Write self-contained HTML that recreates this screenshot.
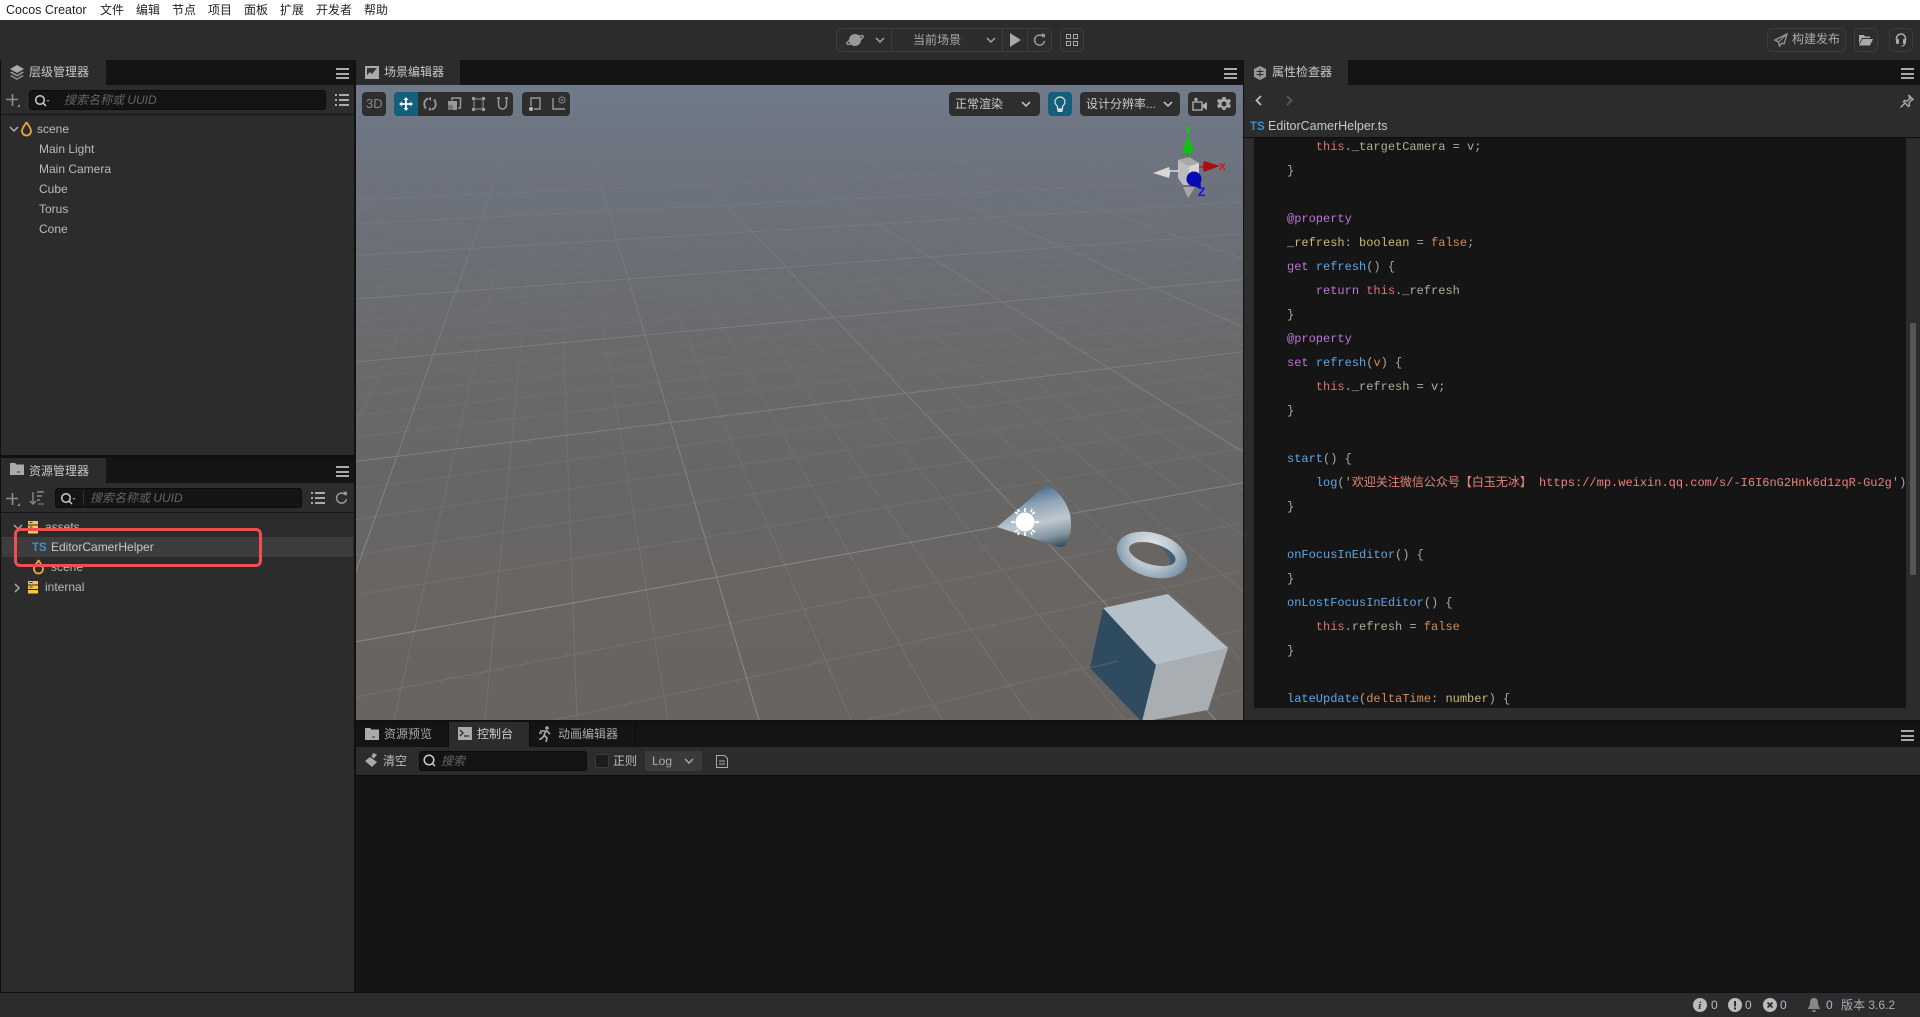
<!DOCTYPE html>
<html lang="zh">
<head>
<meta charset="utf-8">
<title>Cocos Creator</title>
<style>
html,body{margin:0;padding:0;width:1920px;height:1017px;overflow:hidden;background:#111;font-family:"Liberation Sans","Noto Sans CJK SC",sans-serif;font-size:12px;color:#bbb}
div,span,svg{box-sizing:border-box}
.a{position:absolute}
.t{position:absolute;white-space:nowrap;line-height:20px;height:20px;font-size:12px}
.p{background:#2c2c2c}
.hd{position:absolute;background:#141414}
.hb{position:absolute;width:13px;height:11px;border-top:2px solid #aaa;border-bottom:2px solid #aaa}
.hb:after{content:"";position:absolute;left:0;right:0;top:2.5px;height:2px;background:#aaa}
.box{position:absolute;background:#141414;border-radius:3px;border:1px solid #0c0c0c}
.ph{font-style:italic;color:#646464}
.btn{position:absolute;top:92px;height:24px;background:#2e2e2e;border-radius:4px}
.tb{position:absolute;border:1px solid #3c3c3c;border-radius:5px;background:#2d2d2d}
svg{position:absolute;overflow:visible}
.code{position:absolute;left:1254px;top:138px;width:652px;height:570px;background:#151515;overflow:hidden;font-family:"Liberation Mono","Noto Sans CJK SC",monospace;font-size:12px;line-height:24px;color:#abb2bf}
.code pre{margin:-3px 0 0 33px;padding:0;font:inherit;white-space:pre}
.r{color:#d9707a}.m{color:#b3aa9c}.u{color:#bb78d6}.l{color:#5ea6e4}.y{color:#cdb878}.o{color:#d28c5a}.s{color:#e8827a}.g{color:#a3aca4}.c{color:#b5ad8c}
</style>
</head>
<body>
<!-- menu -->
<div class="a" style="left:0;top:0;width:1920px;height:20px;background:#fff;color:#222">
<span class="t" style="left:6px;top:0;font-size:12.500px">Cocos Creator</span>
<span class="t" style="left:100px;top:0">文件</span><span class="t" style="left:136px;top:0">编辑</span><span class="t" style="left:172px;top:0">节点</span><span class="t" style="left:208px;top:0">项目</span><span class="t" style="left:244px;top:0">面板</span><span class="t" style="left:280px;top:0">扩展</span><span class="t" style="left:316px;top:0">开发者</span><span class="t" style="left:364px;top:0">帮助</span>
</div>
<!-- top toolbar -->
<div class="a p" style="left:0;top:20px;width:1920px;height:40px"></div>
<div class="tb" style="left:836px;top:28px;width:216px;height:24px"></div>
<div class="a" style="left:891px;top:29px;width:1px;height:22px;background:#3c3c3c"></div>
<div class="a" style="left:1002px;top:29px;width:1px;height:22px;background:#3c3c3c"></div>
<div class="a" style="left:1027px;top:29px;width:1px;height:22px;background:#3c3c3c"></div>
<svg style="left:846px;top:32px" width="18" height="16" viewBox="0 0 18 16"><circle cx="9" cy="8" r="6" fill="#999"/><ellipse cx="9" cy="8" rx="9" ry="2.4" transform="rotate(-25 9 8)" fill="none" stroke="#999" stroke-width="1.4"/></svg>
<svg style="left:875px;top:37px" width="10" height="6"><path d="M1 1l4 4 4-4" fill="none" stroke="#aaa" stroke-width="1.4"/></svg>
<span class="t" style="left:913px;top:30px;color:#aaa">当前场景</span>
<svg style="left:986px;top:37px" width="10" height="6"><path d="M1 1l4 4 4-4" fill="none" stroke="#aaa" stroke-width="1.4"/></svg>
<svg style="left:1010px;top:32px" width="11" height="16"><path d="M0 1l11 7-11 7z" fill="#aaa"/></svg>
<svg style="left:1033px;top:33px" width="13" height="14" viewBox="0 0 13 14"><path d="M10.5 4A5 5 0 1 0 11.5 8" fill="none" stroke="#999" stroke-width="1.5"/><path d="M8 0.5l4 0.5v4z" fill="#999"/></svg>
<div class="tb" style="left:1060px;top:28px;width:24px;height:24px"></div>
<svg style="left:1066px;top:34px" width="12" height="12"><g fill="none" stroke="#aaa"><rect x=".5" y=".5" width="4" height="4"/><rect x="7.5" y=".5" width="4" height="4"/><rect x=".5" y="7.5" width="4" height="4"/><rect x="7.5" y="7.5" width="4" height="4"/></g></svg>
<div class="tb" style="left:1767px;top:28px;width:79px;height:24px"></div>
<svg style="left:1774px;top:33px" width="14" height="14" viewBox="0 0 14 14"><path d="M13 1L1 7l3.500 2 1 4L8 10l2 1z" fill="none" stroke="#999" stroke-width="1.3"/><path d="M13 1L4.500 9" stroke="#999"/></svg>
<span class="t" style="left:1792px;top:29px;color:#aaa">构建发布</span>
<div class="tb" style="left:1854px;top:28px;width:24px;height:24px"></div>
<svg style="left:1859px;top:34px" width="14" height="12" viewBox="0 0 14 12"><path d="M0 1h5l1 1.500h5V4H3L0 10z M3.500 5H14l-3 6.500H0z" fill="#aaa"/></svg>
<div class="tb" style="left:1889px;top:28px;width:24px;height:24px"></div>
<svg style="left:1895px;top:33px" width="12" height="14" viewBox="0 0 12 14"><path d="M1.500 7V5.500a4.500 4.500 0 0 1 9 0V7" fill="none" stroke="#aaa" stroke-width="1.600"/><rect x="1" y="6" width="3" height="5" rx="1" fill="#aaa"/><rect x="8" y="6" width="3" height="5" rx="1" fill="#aaa"/><path d="M9.500 11c0 2-2 2-3 2" fill="none" stroke="#aaa"/></svg>

<!-- hierarchy -->
<div class="a p" style="left:1px;top:61px;width:353px;height:394px"></div>
<div class="hd" style="left:1px;top:61px;width:353px;height:24px"></div>
<div class="a" style="left:1px;top:60px;width:105px;height:25px;background:#2c2c2c"></div>
<svg style="left:10px;top:65px" width="14" height="16" viewBox="0 0 14 16"><path d="M7 0l7 4-7 4-7-4z" fill="#aaa"/><path d="M1.500 6.500L0 7.500l7 4 7-4-1.500-1L7 9.700z" fill="#999"/><path d="M1.500 10L0 11l7 4 7-4-1.500-1L7 13.200z" fill="#888"/></svg>
<span class="t" style="left:29px;top:62px;color:#c8c8c8">层级管理器</span>
<div class="hb" style="left:336px;top:68px"></div>
<div class="a" style="left:1px;top:114px;width:353px;height:1px;background:#161616"></div>
<svg style="left:6px;top:93px" width="14" height="14"><path d="M6.500 1v12M0 6.500h12" stroke="#8e8e8e" stroke-width="1.600"/><path d="M14 11v3h-3z" fill="#8e8e8e"/></svg>
<div class="box" style="left:29px;top:90px;width:297px;height:20px"></div>
<svg style="left:34px;top:94px" width="16" height="13"><circle cx="6" cy="6" r="4.300" fill="none" stroke="#ccc" stroke-width="1.500"/><path d="M9 9l3 3" stroke="#ccc" stroke-width="1.500"/><path d="M12.500 6h3l-1.500 2z" fill="#999"/></svg>
<span class="t ph" style="left:64px;top:90px">搜索名称或 UUID</span>
<svg style="left:335px;top:94px" width="14" height="12"><g fill="#aaa"><rect y="0" width="2" height="2"/><rect y="5" width="2" height="2"/><rect y="10" width="2" height="2"/><rect x="4" y="0" width="10" height="2"/><rect x="4" y="5" width="10" height="2"/><rect x="4" y="10" width="10" height="2"/></g></svg>
<svg style="left:9px;top:126px" width="10" height="6"><path d="M1 1l4 4 4-4" fill="none" stroke="#aaa" stroke-width="1.500"/></svg>
<svg style="left:21px;top:121px" width="11" height="16" viewBox="0 0 11 16"><path d="M5.500 1C5 3 1 6.500 1 10a4.500 4.500 0 0 0 9 0C10 6.500 6 3 5.500 1z" fill="none" stroke="#e9a33c" stroke-width="1.800"/></svg>
<span class="t" style="left:37px;top:119px">scene</span>
<span class="t" style="left:39px;top:139px">Main Light</span>
<span class="t" style="left:39px;top:159px">Main Camera</span>
<span class="t" style="left:39px;top:179px">Cube</span>
<span class="t" style="left:39px;top:199px">Torus</span>
<span class="t" style="left:39px;top:219px">Cone</span>

<!-- assets -->
<div class="a p" style="left:1px;top:458px;width:353px;height:534px"></div>
<div class="hd" style="left:1px;top:458px;width:353px;height:25px"></div>
<div class="a" style="left:1px;top:458px;width:105px;height:25px;background:#2c2c2c"></div>
<svg style="left:10px;top:463px" width="14" height="12" viewBox="0 0 14 12"><path d="M0 0h5l1.500 1.500H14V12H0z" fill="#aaa"/><rect x="7" y="8.500" width="3" height="1" fill="#333"/></svg>
<span class="t" style="left:29px;top:461px;color:#c8c8c8">资源管理器</span>
<div class="hb" style="left:336px;top:466px"></div>
<div class="a" style="left:1px;top:512px;width:353px;height:1px;background:#161616"></div>
<svg style="left:6px;top:492px" width="14" height="14"><path d="M6.500 1v12M0 6.500h12" stroke="#8e8e8e" stroke-width="1.600"/><path d="M14 11v3h-3z" fill="#8e8e8e"/></svg>
<svg style="left:30px;top:491px" width="15" height="15"><path d="M3 1v12M0 10l3 3 3-3" fill="none" stroke="#888" stroke-width="1.400"/><path d="M7 1h7M7 5h5M7 9h3" stroke="#888" stroke-width="1.400"/><path d="M8 13h6" stroke="#888"/></svg>
<div class="box" style="left:55px;top:488px;width:247px;height:20px"></div>
<div class="a" style="left:83px;top:491px;width:1px;height:14px;background:#333"></div>
<svg style="left:60px;top:492px" width="16" height="13"><circle cx="6" cy="6" r="4.300" fill="none" stroke="#ccc" stroke-width="1.500"/><path d="M9 9l3 3" stroke="#ccc" stroke-width="1.500"/><path d="M12.500 6h3l-1.500 2z" fill="#999"/></svg>
<span class="t ph" style="left:90px;top:488px">搜索名称或 UUID</span>
<svg style="left:311px;top:492px" width="14" height="12"><g fill="#aaa"><rect y="0" width="2" height="2"/><rect y="5" width="2" height="2"/><rect y="10" width="2" height="2"/><rect x="4" y="0" width="10" height="2"/><rect x="4" y="5" width="10" height="2"/><rect x="4" y="10" width="10" height="2"/></g></svg>
<svg style="left:335px;top:491px" width="13" height="14" viewBox="0 0 13 14"><path d="M10.500 4A5 5 0 1 0 11.500 8" fill="none" stroke="#999" stroke-width="1.500"/><path d="M8 .5l4 .5v4z" fill="#999"/></svg>
<svg style="left:13px;top:524px" width="10" height="6"><path d="M1 1l4 4 4-4" fill="none" stroke="#aaa" stroke-width="1.500"/></svg>
<svg style="left:28px;top:521px" width="10" height="13"><rect width="10" height="3.500" fill="#f5c84c"/><rect y="4.500" width="10" height="3.500" fill="#f5c84c"/><rect y="9" width="10" height="3.500" fill="#f5c84c"/><rect x="1.500" y="1" width="3" height="1" fill="#333"/><rect x="1.500" y="5.500" width="3" height="1" fill="#333"/></svg>
<span class="t" style="left:45px;top:517px">assets</span>
<div class="a" style="left:2px;top:537px;width:351px;height:20px;background:#3d3d3d"></div>
<span class="t" style="left:32px;top:537px;color:#3a8fd0;font-weight:bold;font-size:12px;transform:scaleX(.95);transform-origin:0 50%">TS</span>
<span class="t" style="left:51px;top:537px;color:#c8c8c8">EditorCamerHelper</span>
<svg style="left:33px;top:559px" width="11" height="16" viewBox="0 0 11 16"><path d="M5.500 1C5 3 1 6.500 1 10a4.500 4.500 0 0 0 9 0C10 6.500 6 3 5.500 1z" fill="none" stroke="#e9a33c" stroke-width="1.800"/></svg>
<span class="t" style="left:51px;top:557px">scene</span>
<svg style="left:14px;top:583px" width="6" height="10"><path d="M1 1l4 4-4 4" fill="none" stroke="#aaa" stroke-width="1.500"/></svg>
<svg style="left:28px;top:581px" width="10" height="13"><rect width="10" height="3.500" fill="#f5c84c"/><rect y="4.500" width="10" height="3.500" fill="#f5c84c"/><rect y="9" width="10" height="3.500" fill="#f5c84c"/><rect x="1.500" y="1" width="3" height="1" fill="#333"/><rect x="1.500" y="5.500" width="3" height="1" fill="#333"/></svg>
<span class="t" style="left:45px;top:577px">internal</span>
<div class="a" style="left:14px;top:528px;width:248px;height:39px;border:3.500px solid #ee4f4f;border-radius:6px"></div>

<!-- scene -->
<div class="hd" style="left:356px;top:61px;width:887px;height:24px"></div>
<div class="a" style="left:356px;top:60px;width:104px;height:25px;background:#2c2c2c"></div>
<svg style="left:365px;top:66px" width="14" height="13"><rect width="14" height="13" fill="#aaa"/><path d="M2 2v7l3-3 2 2 5-6z" fill="#333"/></svg>
<span class="t" style="left:384px;top:62px;color:#c8c8c8">场景编辑器</span>
<div class="hb" style="left:1224px;top:68px"></div>
<div class="a" style="left:356px;top:85px;width:887px;height:635px;overflow:hidden;background:linear-gradient(180deg,#707b8b 0,#6e7582 8%,#6b6f76 25%,#696a6b 42%,#686664 62%,#686462 100%)">
<svg style="left:0;top:0" width="887" height="635" viewBox="356 85 887 635">
<defs>
<linearGradient id="gm" gradientUnits="userSpaceOnUse" x1="0" y1="130" x2="0" y2="620"><stop offset="0" stop-color="#fff" stop-opacity="0"/><stop offset=".35" stop-color="#fff" stop-opacity=".1"/><stop offset="1" stop-color="#fff" stop-opacity=".24"/></linearGradient>
<linearGradient id="gn" gradientUnits="userSpaceOnUse" x1="0" y1="150" x2="0" y2="620"><stop offset="0" stop-color="#fff" stop-opacity="0"/><stop offset=".35" stop-color="#fff" stop-opacity=".03"/><stop offset="1" stop-color="#fff" stop-opacity=".08"/></linearGradient>
<linearGradient id="cone" gradientUnits="userSpaceOnUse" x1="1047" y1="486" x2="1060" y2="547"><stop offset="0" stop-color="#4d7190"/><stop offset=".25" stop-color="#8ea4b5"/><stop offset=".55" stop-color="#bfc8cf"/><stop offset=".8" stop-color="#84969f"/><stop offset="1" stop-color="#32495c"/></linearGradient>
<radialGradient id="tor" gradientUnits="userSpaceOnUse" cx="-2" cy="-8" r="40"><stop offset="0" stop-color="#e4e7ea"/><stop offset=".55" stop-color="#b9c4cd"/><stop offset="1" stop-color="#6f8da5"/></radialGradient>
</defs>
<path fill="none" stroke="url(#gn)" stroke-width="1" d="M552 21L-976 720M552 21L-885 720M552 21L-793 720M552 21L-702 720M552 21L-519 720M552 21L-428 720M552 21L-337 720M552 21L-245 720M552 21L-63 720M552 21L29 720M552 21L120 720M552 21L211 720M552 21L394 720M552 21L485 720M552 21L577 720M552 21L668 720M552 21L851 720M552 21L942 720M552 21L1033 720M552 21L1125 720M552 21L1307 720M552 21L1399 720M552 21L1490 720M552 21L1581 720M552 21L1764 720M552 21L1855 720M552 21L1947 720M552 21L2038 720M552 21L2221 720M552 21L2312 720M552 21L2404 720M552 21L2495 720M552 21L2678 720M552 21L2769 720M552 21L2860 720M552 21L2952 720
M355 926.500L1245 689M355 843.600L1245 629M355 763.300L1245 570M355 697.300L1245 522.500M355 595L1245 448M355 554.700L1245 419M355 519.600L1245 393.500M355 488.800L1245 371M355 437.300L1245 334M355 415.600L1245 318M355 396L1245 304M355 378.200L1245 291M355 347.300L1245 268.500M355 333.800L1245 258.700M355 321.300L1245 249.600M355 309.800L1245 241.300M355 289.200L1245 226.300M355 279.900L1245 219.600M355 271.300L1245 213.300M355 263.200L1245 207.500M355 241.800L1245 192"/>
<path fill="none" stroke="url(#gm)" stroke-width="1" d="M552 21L-1067 720M552 21L-611 720M552 21L-154 720M552 21L303 720M552 21L759 720M552 21L1216 720M552 21L1673 720M552 21L2130 720M552 21L2586 720
M355 642L1245 482.400M355 461.500L1245 351.400M355 362.100L1245 279.200M355 299.100L1245 233.500M355 255.600L1245 201.900M355 223.800L1245 178.900M355 199.500L1245 161.200"/>
<!-- cone -->
<path d="M997 527L1043 488Q1047 485 1051 487C1062 494 1072 510 1071 525C1071 538 1066 548 1060 547L1056 546z" fill="url(#cone)"/>
<circle cx="1025" cy="522" r="9.500" fill="#fff"/>
<g stroke="#fff" stroke-width="1.700"><path d="M1025 508v4M1025 532v4M1011 522h4M1035 522h4M1015 512l3 2M1032 530l3 2M1035 512l-3 2M1018 530l-3 2M1018 509l1 3M1031 532l1 3M1032 509l-1 3M1019 532l-1 3"/></g>
<!-- torus -->
<g transform="translate(1152 555) rotate(16)">
<path fill-rule="evenodd" d="M-36 0a36 22 0 1 0 72 0a36 22 0 1 0-72 0zM-24 -1a24 10.500 0 1 0 48 0a24 10.500 0 1 0-48 0z" fill="url(#tor)"/>
<path d="M2 -11.400A24 10.500 0 0 1 24 -1A24 10.500 0 0 1 20 5Q19 -6 2 -11.400z" fill="#3f5f78"/>
</g>
<!-- cube -->
<path d="M1103 608L1168 594L1228 648L1156 665z" fill="#b6c0c9"/>
<path d="M1103 608L1156 665L1142 722L1090 668z" fill="#2f4b60"/>
<path d="M1156 665L1228 648L1208 710L1142 722z" fill="#a9aeb3"/>
<path d="M1090 668L1118 661" stroke="#fff" stroke-opacity=".15" stroke-width="1"/>
<!-- gizmo -->
<path d="M1188 150v12" stroke="#1aa01a" stroke-width="1.500"/>
<path d="M1188 135L1194 152Q1188 155 1182 152z" fill="#11c011"/>
<path d="M1178 160l11-3 10 6-10 3z" fill="#a8a8a8"/>
<path d="M1178 160l11 6v19l-6 0-5-7z" fill="#bdbdbd"/>
<path d="M1189 166l10-3v19l-10 3z" fill="#d6d6d6"/>
<path d="M1168 171h11" stroke="#ddd" stroke-width="1.500"/>
<path d="M1153 173L1169 167Q1171 172 1169 178z" fill="#d9d9d9"/>
<path d="M1199 167h6" stroke="#d41414" stroke-width="1.500"/>
<path d="M1204 161L1220 166L1204 172Q1202 166 1204 161z" fill="#a81010"/>
<path d="M1183 187L1195 187L1188 198z" fill="#a6a6a6"/>
<circle cx="1194" cy="179" r="7.500" fill="#0808b4"/>
<path d="M1189 184L1201 189L1200 176z" fill="#0808b4"/>
<text x="1184.500" y="134" font-family="Liberation Sans" font-size="11" font-weight="bold" fill="#10d010">Y</text>
<text x="1219" y="170" font-family="Liberation Sans" font-size="10" font-weight="bold" fill="#e01010">X</text>
<text x="1198" y="196" font-family="Liberation Sans" font-size="12" font-weight="bold" fill="#1010f0">Z</text>
</svg>
</div>
<!-- scene tool buttons -->
<div class="btn" style="left:362px;width:24px"></div>
<span class="t" style="left:366px;top:94px;color:#888;font-size:13px">3D</span>
<div class="btn" style="left:394px;width:119px"></div>
<div class="a" style="left:394px;top:92px;width:24px;height:24px;background:#14607c;border-radius:4px 0 0 4px"></div>
<svg style="left:399px;top:97px" width="14" height="14" viewBox="0 0 14 14"><path d="M7 0l2.500 3H8v3h3V4.500L14 7l-3 2.500V8H8v3h1.500L7 14l-2.500-3H6V8H3v1.500L0 7l3-2.500V6h3V3H4.500z" fill="#eee"/></svg>
<svg style="left:423px;top:97px" width="14" height="14" viewBox="0 0 14 14"><path d="M3 11C0 8 1 3 5 1.500M11 3c3 3 2 8-2 9.500" fill="none" stroke="#999" stroke-width="1.800"/><path d="M8 0v4L5 1.500zM6 14v-4l3 2.500zM1 12l1-3 2 2zM13 2l-1 3-2-2z" fill="#999"/></svg>
<svg style="left:448px;top:97px" width="13" height="14" viewBox="0 0 13 14"><path d="M4 3.500V1h8.500v10H10" fill="none" stroke="#999" stroke-width="1.500"/><rect x="0" y="4" width="9" height="9" fill="#999"/><rect x="0" y="8" width="5" height="5" fill="#777"/></svg>
<svg style="left:472px;top:97px" width="13" height="14"><path d="M2 2h9v10H2z" fill="none" stroke="#999"/><g fill="#999"><rect width="3" height="3"/><rect x="10" width="3" height="3"/><rect y="11" width="3" height="3"/><rect x="10" y="11" width="3" height="3"/></g></svg>
<svg style="left:497px;top:97px" width="11" height="14"><path d="M1.500 2v6a4 4 0 0 0 8 0V2" fill="none" stroke="#999" stroke-width="1.500"/><path d="M0 0h3v2H0zM8 0h3v2H8z" fill="#888"/></svg>
<div class="btn" style="left:522px;width:48px"></div>
<svg style="left:529px;top:97px" width="12" height="14"><path d="M2 9V1h9v11H5" fill="none" stroke="#999" stroke-width="1.400"/><circle cx="2" cy="12" r="2" fill="#bbb"/></svg>
<svg style="left:552px;top:96px" width="14" height="15"><path d="M1 2v11h12" fill="none" stroke="#999" stroke-width="1.400"/><circle cx="10" cy="4" r="3" fill="none" stroke="#888"/><circle cx="10" cy="4" r="1" fill="#888"/></svg>
<div class="btn" style="left:949px;width:91px"></div>
<span class="t" style="left:955px;top:94px;color:#ccc">正常渲染</span>
<svg style="left:1021px;top:101px" width="10" height="6"><path d="M1 1l4 4 4-4" fill="none" stroke="#ccc" stroke-width="1.500"/></svg>
<div class="btn" style="left:1048px;width:24px;background:#14607c"></div>
<svg style="left:1054px;top:96px" width="12" height="17" viewBox="0 0 12 17"><path d="M3.500 10.500C2 9 1 7.800 1 6a5 5 0 0 1 10 0c0 1.800-1 3-2.500 4.500V13h-5z" fill="none" stroke="#ddd" stroke-width="1.200"/><rect x="3.500" y="13.500" width="5" height="2.500" fill="#ddd"/></svg>
<div class="btn" style="left:1080px;width:100px"></div>
<span class="t" style="left:1086px;top:94px;color:#ccc">设计分辨率...</span>
<svg style="left:1163px;top:101px" width="10" height="6"><path d="M1 1l4 4 4-4" fill="none" stroke="#ccc" stroke-width="1.500"/></svg>
<div class="btn" style="left:1188px;width:48px"></div>
<svg style="left:1193px;top:97px" width="14" height="14"><rect x="0" y="5" width="9" height="8" fill="none" stroke="#aaa" stroke-width="1.400"/><path d="M9 8l5-3v8l-5-3z" fill="#aaa"/><circle cx="3" cy="2.500" r="1.700" fill="#aaa"/></svg>
<svg style="left:1217px;top:97px" width="14" height="14" viewBox="0 0 14 14"><path fill-rule="evenodd" d="M5.500 0h3l.4 2 1.700.8 1.900-1 1.500 2.600-1.500 1.300v1.600l1.500 1.300-1.500 2.600-1.900-1-1.700.8-.4 2h-3l-.4-2-1.700-.8-1.900 1-1.500-2.600 1.500-1.300V5.700L0 4.400l1.500-2.600 1.900 1 1.700-.8zM7 4.500a2.500 2.500 0 1 0 0 5 2.500 2.500 0 0 0 0-5z" fill="#aaa"/></svg>

<!-- inspector -->
<div class="a p" style="left:1244px;top:61px;width:676px;height:659px"></div>
<div class="hd" style="left:1244px;top:61px;width:676px;height:24px"></div>
<div class="a" style="left:1244px;top:60px;width:104px;height:25px;background:#2c2c2c"></div>
<svg style="left:1254px;top:66px" width="12" height="14" viewBox="0 0 12 14"><path d="M6 0l6 3v8l-6 3-6-3V3z" fill="#999"/><path d="M6 3v8M2.500 5.500h7M2.500 8.500h7" stroke="#2c2c2c" stroke-width="1"/></svg>
<span class="t" style="left:1272px;top:62px;color:#c8c8c8">属性检查器</span>
<div class="hb" style="left:1901px;top:68px"></div>
<svg style="left:1255px;top:95px" width="7" height="11"><path d="M6 1L1.500 5.500 6 10" fill="none" stroke="#bbb" stroke-width="1.800"/></svg>
<svg style="left:1286px;top:95px" width="7" height="11"><path d="M1 1l4.500 4.500L1 10" fill="none" stroke="#5a5a5a" stroke-width="1.800"/></svg>
<svg style="left:1900px;top:94px" width="14" height="14" viewBox="0 0 14 14"><path d="M8.500 1l4.500 4.500-1.500.5-2.500 3 .5 2.500-1 1-5-5 1-1 2.500.5 3-2.500zM4.500 9.500L.5 13.500" fill="none" stroke="#aaa" stroke-width="1.400"/></svg>
<span class="t" style="left:1250px;top:116px;color:#3a8fd0;font-weight:bold;font-size:12px;transform:scaleX(.95);transform-origin:0 50%">TS</span>
<span class="t" style="left:1268px;top:116px;color:#c8c8c8;font-size:12.500px">EditorCamerHelper.ts</span>
<div class="a" style="left:1244px;top:137px;width:676px;height:1px;background:#0e0e0e"></div>
<div class="code"><pre>    <span class="r">this</span><span class="m">._targetCamera = v;</span>
<span class="c">}</span>

<span class="u">@property</span>
<span class="y">_refresh</span><span class="g">: </span><span class="y">boolean</span><span class="g"> = </span><span class="o">false</span><span class="g">;</span>
<span class="u">get</span> <span class="l">refresh</span><span class="g">() {</span>
    <span class="u">return</span> <span class="r">this</span><span class="m">._refresh</span>
<span class="c">}</span>
<span class="u">@property</span>
<span class="u">set</span> <span class="l">refresh</span><span class="g">(</span><span class="o">v</span><span class="g">) {</span>
    <span class="r">this</span><span class="m">._refresh = v;</span>
<span class="c">}</span>

<span class="l">start</span><span class="g">() {</span>
    <span class="l">log</span><span class="g">(</span><span class="s">'欢迎关注微信公众号【白玉无冰】 https://mp.weixin.qq.com/s/-I6I6nG2Hnk6d1zqR-Gu2g'</span><span class="g">)</span>
<span class="c">}</span>

<span class="l">onFocusInEditor</span><span class="g">() {</span>
<span class="c">}</span>
<span class="l">onLostFocusInEditor</span><span class="g">() {</span>
    <span class="r">this</span><span class="m">.refresh = </span><span class="o">false</span>
<span class="c">}</span>

<span class="l">lateUpdate</span><span class="g">(</span><span class="o">deltaTime</span><span class="g">: </span><span class="y">number</span><span class="g">) {</span></pre></div>
<div class="a" style="left:1910px;top:323px;width:6px;height:252px;background:#555;border-radius:1px"></div>

<!-- bottom console -->
<div class="hd" style="left:356px;top:722px;width:1564px;height:25px"></div>
<div class="a" style="left:449px;top:722px;width:80px;height:25px;background:#2c2c2c"></div>
<div class="a" style="left:448px;top:722px;width:1px;height:25px;background:#0c0c0c"></div>
<div class="a" style="left:529px;top:722px;width:1px;height:25px;background:#0c0c0c"></div>
<div class="a" style="left:635px;top:722px;width:1px;height:25px;background:#0c0c0c"></div>
<svg style="left:365px;top:728px" width="14" height="12"><path d="M0 0h5l1.500 1.500H14V12H0z" fill="#aaa"/><rect x="7" y="8.500" width="3" height="1" fill="#333"/></svg>
<span class="t" style="left:384px;top:724px;color:#aaa">资源预览</span>
<svg style="left:458px;top:727px" width="14" height="13"><rect width="14" height="13" fill="#aaa"/><path d="M2 3l3 3-3 3" fill="none" stroke="#333" stroke-width="1.400"/><path d="M6 9h5" stroke="#333" stroke-width="1.400"/></svg>
<span class="t" style="left:477px;top:724px;color:#d0d0d0">控制台</span>
<svg style="left:539px;top:726px" width="12" height="17" viewBox="0 0 12 17"><circle cx="8" cy="2" r="1.800" fill="#aaa"/><path d="M1 5h7l3 3M7 5L5 9l3 3-1 4M5 10l-3 3H0M3 7H0" fill="none" stroke="#aaa" stroke-width="1.600"/></svg>
<span class="t" style="left:558px;top:724px;color:#aaa">动画编辑器</span>
<div class="hb" style="left:1901px;top:730px"></div>
<div class="a p" style="left:356px;top:747px;width:1564px;height:28px"></div>
<div class="a" style="left:356px;top:775px;width:1564px;height:217px;background:#141414;border-top:1px solid #0c0c0c"></div>
<svg style="left:365px;top:753px" width="13" height="15" viewBox="0 0 13 15"><path d="M0 8l5-4 7 5-5 5zM8 0l4 1.500-3 4-2.500-2z" fill="#aaa"/></svg>
<span class="t" style="left:383px;top:751px;color:#bbb">清空</span>
<div class="box" style="left:419px;top:751px;width:168px;height:20px"></div>
<svg style="left:423px;top:754px" width="14" height="14"><circle cx="6" cy="6" r="4.800" fill="none" stroke="#ccc" stroke-width="1.500"/><path d="M9.500 9.500L12 12" stroke="#ccc" stroke-width="1.500"/></svg>
<span class="t ph" style="left:441px;top:751px">搜索</span>
<div class="a" style="left:595px;top:754px;width:14px;height:14px;background:#1c1c1c;border:1px solid #3a3a3a;border-radius:2px"></div>
<span class="t" style="left:613px;top:751px;color:#bbb">正则</span>
<div class="a" style="left:645px;top:751px;width:57px;height:20px;background:#3a3a3a;border-radius:2px"></div>
<span class="t" style="left:652px;top:751px;color:#aaa">Log</span>
<svg style="left:684px;top:758px" width="10" height="6"><path d="M1 1l4 4 4-4" fill="none" stroke="#aaa" stroke-width="1.400"/></svg>
<svg style="left:716px;top:755px" width="12" height="13"><path d="M.5.500h8l3 3v9H.5z" fill="none" stroke="#aaa"/><path d="M3 6h6M3 9h6" stroke="#aaa"/></svg>

<!-- status -->
<div class="a p" style="left:0;top:993px;width:1920px;height:24px"></div>
<svg style="left:1693px;top:998px" width="14" height="14"><circle cx="7" cy="7" r="7" fill="#bbb"/><text x="5.200" y="11" font-family="Liberation Serif" font-style="italic" font-weight="bold" font-size="11" fill="#2c2c2c">i</text></svg>
<span class="t" style="left:1711px;top:995px;color:#a9bdd2">0</span>
<svg style="left:1728px;top:998px" width="14" height="14"><circle cx="7" cy="7" r="7" fill="#bbb"/><rect x="6" y="3" width="2" height="5.500" fill="#2c2c2c"/><rect x="6" y="9.500" width="2" height="2" fill="#2c2c2c"/></svg>
<span class="t" style="left:1745px;top:995px;color:#a9bdd2">0</span>
<svg style="left:1763px;top:998px" width="14" height="14"><circle cx="7" cy="7" r="7" fill="#bbb"/><path d="M4.500 4.500l5 5M9.500 4.500l-5 5" stroke="#2c2c2c" stroke-width="1.800"/></svg>
<span class="t" style="left:1780px;top:995px;color:#a9bdd2">0</span>
<svg style="left:1808px;top:998px" width="12" height="14"><path d="M6 0c3 0 4 2.500 4 5 0 3 2 4.500 2 6H0c0-1.500 2-3 2-6 0-2.500 1-5 4-5z" fill="#888"/><rect x="4.500" y="12" width="3" height="2" fill="#888"/></svg>
<span class="t" style="left:1826px;top:995px;color:#a9bdd2">0</span>
<span class="t" style="left:1841px;top:995px;color:#aab;font-size:12px">版本 3.6.2</span>
</body>
</html>
